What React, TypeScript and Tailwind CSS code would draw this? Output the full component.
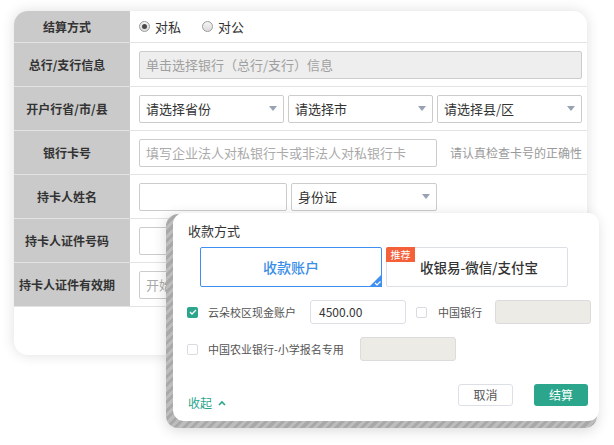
import React from 'react';

const font = "font-['Noto_Sans_CJK_SC','Liberation_Sans',sans-serif]";

function Row({ label, h, children }: { label: string; h: string; children?: React.ReactNode }) {
  return (
    <div className={`flex border-b border-[#e3e3e3] ${h}`}>
      <div className="w-[116px] shrink-0 bg-[#cacaca] flex items-center justify-center pr-[10px] text-[12px] font-bold text-[#333]">
        {label}
      </div>
      <div className="flex-1 flex items-center pl-[9px]">{children}</div>
    </div>
  );
}

function Arrow() {
  return (
    <svg width="8" height="5" viewBox="0 0 8 5" className="shrink-0">
      <path d="M0 0 L8 0 L4 5 Z" fill="#97a3b3" />
    </svg>
  );
}

function Select({ text, w }: { text: string; w: string }) {
  return (
    <div
      className={`${w} h-[28px] border border-[#cccccc] rounded-[2px] bg-white pl-[6px] pr-[6px] flex items-center justify-between text-[13px] text-[#333]`}
    >
      <span>{text}</span>
      <Arrow />
    </div>
  );
}

function Radio({ checked }: { checked?: boolean }) {
  return (
    <span className="w-[11px] h-[11px] rounded-full border border-[#9a9a9a] bg-gradient-to-b from-[#f4f4f4] to-[#dcdcdc] flex items-center justify-center">
      {checked && <span className="w-[5px] h-[5px] rounded-full bg-[#4a4a4a]" />}
    </span>
  );
}

function Check({ checked }: { checked?: boolean }) {
  if (checked) {
    return (
      <span className="w-[11px] h-[11px] rounded-[2px] bg-[#2ba58b] flex items-center justify-center shrink-0">
        <svg width="8" height="6" viewBox="0 0 8 6">
          <path d="M1 3 L3 5 L7 1" stroke="white" strokeWidth="1.3" fill="none" />
        </svg>
      </span>
    );
  }
  return <span className="block w-[11px] h-[11px] rounded-[2px] border border-[#d8dbe2] bg-white shrink-0" />;
}

export default function App() {
  return (
    <div className={`relative w-[614px] h-[445px] bg-white overflow-hidden ${font}`}>
      {/* back form card */}
      <div className="pt-[11px] pl-[14px]">
        <div className="w-[573px] h-[344px] rounded-[14px] overflow-hidden bg-white shadow-[0_0_14px_rgba(0,0,0,0.13)]">
          <Row label="结算方式" h="h-[32px]">
            <Radio checked />
            <span className="ml-[5px] text-[13px] text-[#333]">对私</span>
            <span className="ml-[21px] flex">
              <Radio />
            </span>
            <span className="ml-[5px] text-[13px] text-[#333]">对公</span>
          </Row>
          <Row label="总行/支行信息" h="h-[44px]">
            <div className="w-[443px] h-[28px] border border-[#cccccc] rounded-[2px] bg-[#eeeeee] pl-[6px] flex items-center text-[13px] text-[#a0a0a0]">
              单击选择银行（总行/支行）信息
            </div>
          </Row>
          <Row label="开户行省/市/县" h="h-[44px]">
            <div className="flex gap-[4px]">
              <Select text="请选择省份" w="w-[145px]" />
              <Select text="请选择市" w="w-[145px]" />
              <Select text="请选择县/区" w="w-[145px]" />
            </div>
          </Row>
          <Row label="银行卡号" h="h-[44px]">
            <div className="w-[298px] h-[28px] border border-[#cccccc] rounded-[2px] bg-white pl-[6px] flex items-center text-[13px] text-[#aaaaaa]">
              填写企业法人对私银行卡或非法人对私银行卡
            </div>
            <span className="ml-[13px] text-[12px] text-[#999]">请认真检查卡号的正确性</span>
          </Row>
          <Row label="持卡人姓名" h="h-[44px]">
            <div className="w-[148px] h-[28px] border border-[#cccccc] rounded-[2px] bg-white" />
            <div className="ml-[4px]">
              <Select text="身份证" w="w-[146px]" />
            </div>
          </Row>
          <Row label="持卡人证件号码" h="h-[44px]">
            <div className="w-[298px] h-[28px] border border-[#cccccc] rounded-[2px] bg-white" />
          </Row>
          <Row label="持卡人证件有效期" h="h-[44px]">
            <div className="w-[148px] h-[28px] border border-[#cccccc] rounded-[2px] bg-white pl-[6px] flex items-center text-[13px] text-[#aaaaaa]">
              开始日期
            </div>
          </Row>
        </div>
      </div>

      {/* payment modal overlay */}
      <div className="absolute left-[166px] top-[214px] w-[431px] h-[214px] rounded-[12px] bg-[repeating-linear-gradient(135deg,#a9a9a9_0px,#a9a9a9_3px,#bdbdbd_3px,#bdbdbd_6px)] shadow-[0_2px_14px_rgba(0,0,0,0.16)]" />
      <div className="absolute left-[173px] top-[213px] w-[426px] h-[208px] rounded-[11px] bg-white pl-[14px] pr-[11px] flex flex-col">
        <div className="mt-[9px] ml-[1px] text-[13px] leading-[18px] text-[#333]">收款方式</div>

        <div className="mt-[7px] ml-[13px] flex gap-[4px]">
          <div className="relative w-[182px] h-[40px] border-[1.5px] border-[#3f8ff0] rounded-[2px] flex items-center justify-center text-[14px] font-medium text-[#3a8ee8]">
            收款账户
            <svg width="13" height="13" viewBox="0 0 13 13" className="absolute right-[-1px] bottom-[-1px]">
              <path d="M13 0 L13 13 L0 13 Z" fill="#3f8ff0" />
              <path d="M6 9 L8 11 L11.5 7.5" stroke="white" strokeWidth="1.2" fill="none" />
            </svg>
          </div>
          <div className="relative w-[182px] h-[40px] border border-[#dcdfe6] rounded-[2px] flex items-center pl-[33px] text-[13.5px] font-medium text-[#333]">
            <span className="absolute left-[-1px] top-[-1px] w-[29px] h-[15px] rounded-tl-[2px] bg-[#f4603a] text-white text-[10px] font-normal leading-[15px] text-center">
              推荐
            </span>
            收银易-微信/支付宝
          </div>
        </div>

        <div className="mt-[13px] h-[24px] flex items-center whitespace-nowrap">
          <Check checked />
          <span className="ml-[10px] w-[89px] shrink-0 text-[11px] text-[#555]">云朵校区现金账户</span>
          <div className="ml-[13px] w-[96px] h-[24px] shrink-0 border border-[#dcdfe6] rounded-[3px] bg-white pl-[8px] flex items-center text-[12px] text-[#333]">
            4500.00
          </div>
          <div className="ml-[10px] flex shrink-0">
            <Check />
          </div>
          <span className="ml-[11px] w-[44px] shrink-0 text-[11px] text-[#555]">中国银行</span>
          <div className="ml-[13px] w-[96px] h-[24px] shrink-0 border border-[#dcdcdc] rounded-[3px] bg-[#ecebe5]" />
        </div>

        <div className="mt-[13px] h-[24px] flex items-center whitespace-nowrap">
          <Check />
          <span className="ml-[10px] w-[140px] shrink-0 text-[11px] text-[#555]">中国农业银行-小学报名专用</span>
          <div className="ml-[12px] w-[96px] h-[24px] shrink-0 border border-[#dcdcdc] rounded-[3px] bg-[#ecebe5]" />
        </div>

        <div className="mt-[23px] flex items-start justify-between">
          <div className="mt-[11px] ml-[1px] flex items-center text-[12px] leading-[16px] text-[#2ba58b]">
            收起
            <svg width="8" height="6" viewBox="0 0 8 6" className="ml-[6px]">
              <path d="M1 5 L4 2 L7 5" stroke="#2ba58b" strokeWidth="1.6" fill="none" />
            </svg>
          </div>
          <div className="flex gap-[21px]">
            <div className="w-[55px] h-[22px] border border-[#dcdfe6] rounded-[3px] bg-white flex items-center justify-center text-[12px] text-[#555]">
              取消
            </div>
            <div className="w-[54px] h-[22px] rounded-[3px] bg-[#2ba58b] flex items-center justify-center text-[12px] text-white">
              结算
            </div>
          </div>
        </div>
      </div>
    </div>
  );
}
